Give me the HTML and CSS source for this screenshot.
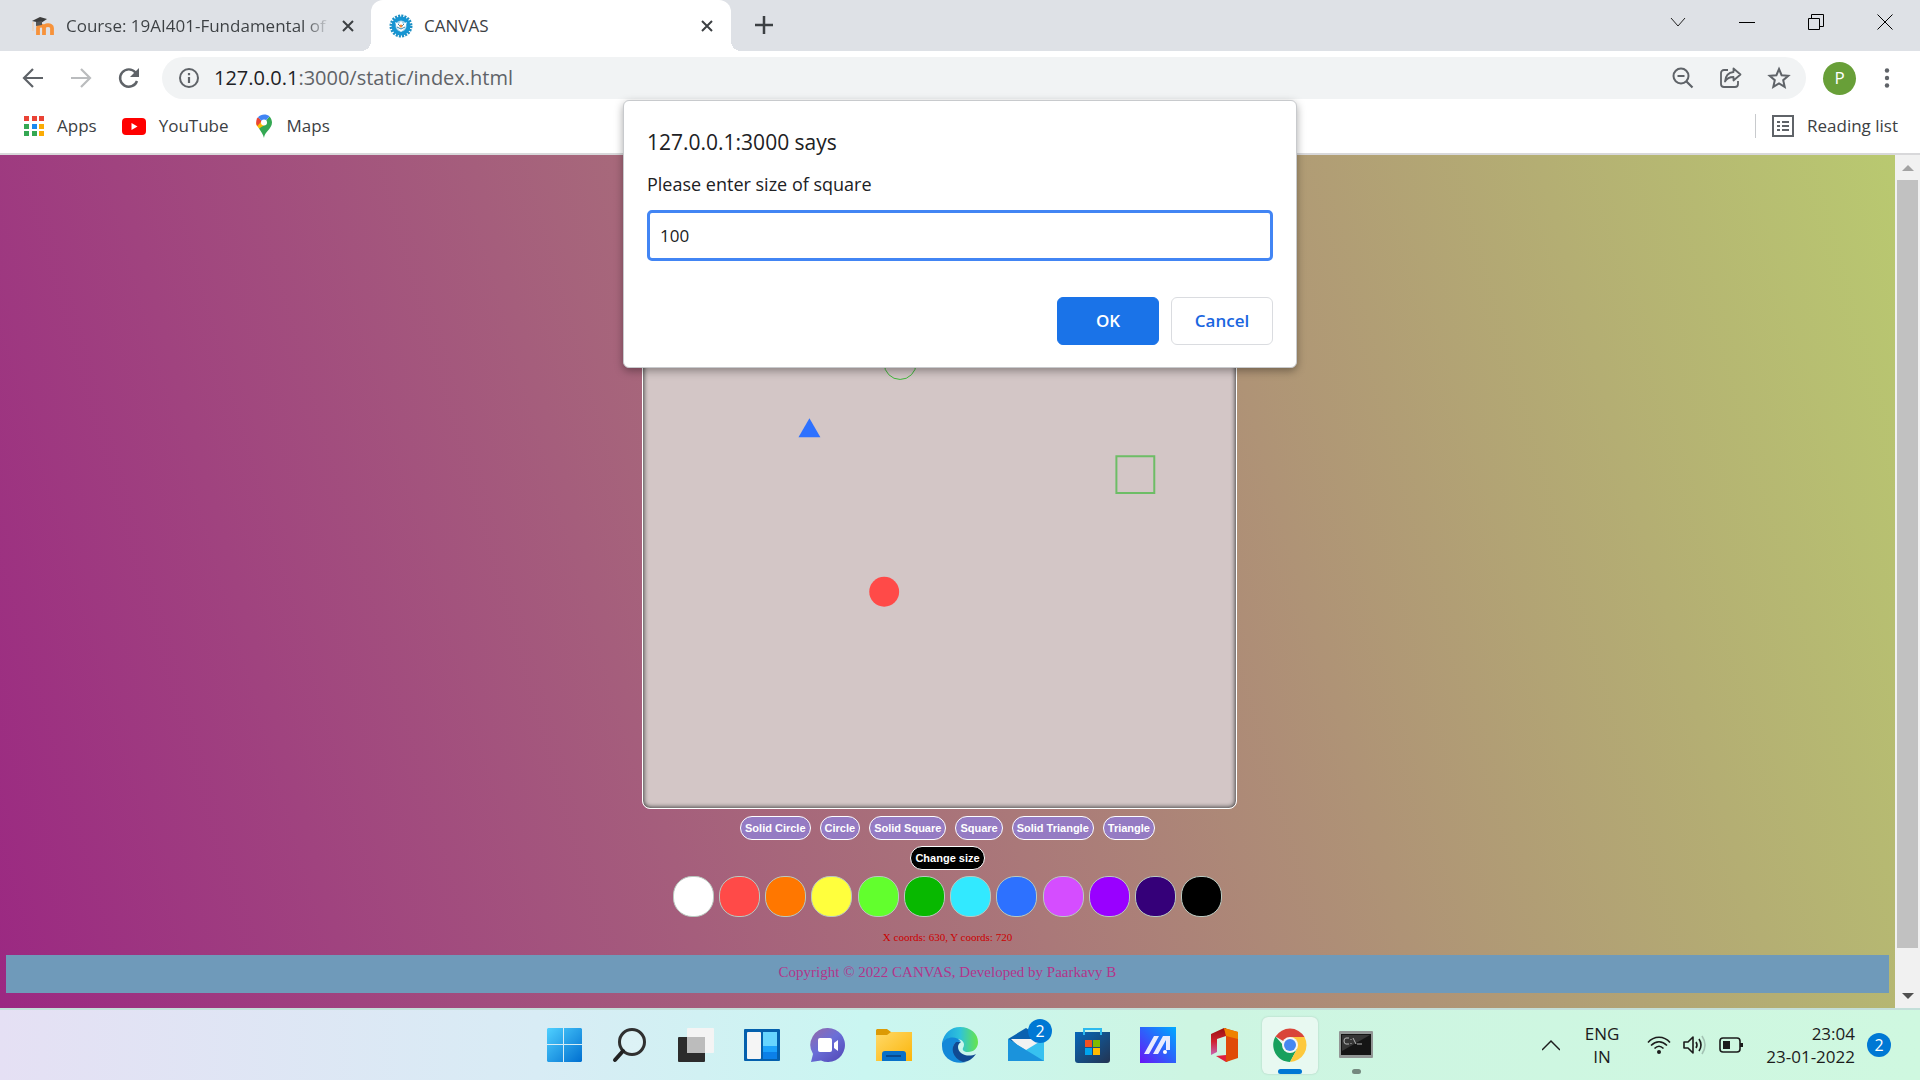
FILE: index.html
```html
<!DOCTYPE html>
<html lang="en">
<head>
<meta charset="utf-8">
<title>CANVAS</title>
<link rel="stylesheet" href="styles.css">
</head>
<body>
<header class="browser">
  <div class="tabstrip">
    <div class="tab tab-idle">
      <svg class="favicon" width="24" height="24" viewBox="0 0 24 24"><path d="M7 21v-7c0-3 6-3.500 6 0v7M13 14c0-3.500 8-4 8 0v7" fill="none" stroke="#f7923a" stroke-width="3.800"/><path d="M1 7l8-4 7 2-6 4z" fill="#3c3c3c"/><path d="M5 8v4l6-1V7z" fill="#555"/><path d="M2 8v9" stroke="#f5c9a2"/></svg>
      <span class="tab-title fade">Course: 19AI401-Fundamental of</span>
      <button class="icon-btn" aria-label="Close tab"><svg width="14" height="14" viewBox="0 0 14 14"><path d="M2 2l10 10M12 2L2 12" stroke="#3c4043" stroke-width="2"/></svg></button>
    </div>
    <div class="tab tab-active">
      <svg class="favicon" width="24" height="24" viewBox="0 0 24 24"><circle cx="12" cy="12" r="10" fill="none" stroke="#1d8fc4" stroke-width="3" stroke-dasharray="2 1.140"/><circle cx="12" cy="12" r="9.500" fill="#1595d3"/><circle cx="12" cy="12" r="5.500" fill="#a9d5ea"/><path d="M6 8l4 2 2-3 2 3 4-2-2 6-4 4-4-4z" fill="#fff"/><path d="M8 13l4 2 4-2M9 10l2 2M15 10l-2 2" fill="none" stroke="#3487ae"/><circle cx="12" cy="12" r="1.500" fill="#f08a3c"/></svg>
      <span class="tab-title">CANVAS</span>
      <button class="icon-btn" aria-label="Close tab"><svg width="14" height="14" viewBox="0 0 14 14"><path d="M2 2l10 10M12 2L2 12" stroke="#3c4043" stroke-width="2"/></svg></button>
    </div>
    <button class="icon-btn new-tab" aria-label="New tab"><svg width="18" height="18" viewBox="0 0 18 18"><path d="M9 0v18M0 9h18" stroke="#3c4043" stroke-width="2.500"/></svg></button>
    <div class="window-controls">
      <button class="icon-btn" aria-label="Search tabs"><svg width="16" height="16" viewBox="0 0 16 16"><path d="M1 4l7 8 7-8" fill="none" stroke="#222"/></svg></button>
      <button class="icon-btn" aria-label="Minimize"><svg width="16" height="16" viewBox="0 0 16 16"><path d="M0 8.500h16" stroke="#000"/></svg></button>
      <button class="icon-btn" aria-label="Restore"><svg width="16" height="16" viewBox="0 0 16 16"><path d="M.5 4.500h11v11H.5zM3.500 4V.5h12v12H12" fill="none" stroke="#000"/></svg></button>
      <button class="icon-btn" aria-label="Close"><svg width="16" height="16" viewBox="0 0 16 16"><path d="M.5.5l15 15M15.500.5l-15 15" stroke="#000"/></svg></button>
    </div>
  </div>
  <div class="toolbar">
    <button class="icon-btn nav" aria-label="Back"><svg width="24" height="24" viewBox="0 0 24 24"><path d="M22 12H3M12 3l-9 9 9 9" fill="none" stroke="#5f6368" stroke-width="2.200"/></svg></button>
    <button class="icon-btn nav" aria-label="Forward"><svg width="24" height="24" viewBox="0 0 24 24"><path d="M2 12h19M12 3l9 9-9 9" fill="none" stroke="#babcbe" stroke-width="2.200"/></svg></button>
    <button class="icon-btn nav" aria-label="Reload"><svg width="24" height="24" viewBox="0 0 24 24"><path d="M20 15a8.700 8.700 0 1 1-1.500-8.500" fill="none" stroke="#5f6368" stroke-width="2.400"/><path d="M22 2v9h-9z" fill="#5f6368"/></svg></button>
    <div class="omnibox">
      <svg width="22" height="22" viewBox="0 0 22 22"><circle cx="11" cy="11" r="9" fill="none" stroke="#5f6368" stroke-width="2"/><path d="M11 10v6M11 6v2.200" stroke="#5f6368" stroke-width="2.200"/></svg>
      <span class="url"><b>127.0.0.1</b>:3000/static/index.html</span>
      <button class="icon-btn" aria-label="Zoom"><svg width="24" height="24" viewBox="0 0 24 24"><circle cx="10" cy="10" r="7.500" fill="none" stroke="#5f6368" stroke-width="2"/><path d="M15 15l6.500 6.500M6.500 10h7" stroke="#5f6368" stroke-width="2.200"/></svg></button>
      <button class="icon-btn" aria-label="Share"><svg width="24" height="24" viewBox="0 0 24 24"><path d="M9 4H5a3 3 0 0 0-3 3v11a3 3 0 0 0 3 3h11a3 3 0 0 0 3-3v-3" fill="none" stroke="#5f6368" stroke-width="1.800"/><path d="M14.500 2.500l7 6-7 6V11c-4 0-6.500 1-8.500 4.500C6.500 10 9.500 6.500 14.500 6z" fill="none" stroke="#5f6368" stroke-width="1.800" stroke-linejoin="round"/></svg></button>
      <button class="icon-btn" aria-label="Bookmark"><svg width="24" height="24" viewBox="0 0 24 24"><path d="M12 3l2.600 6.200 6.700.6-5.100 4.400 1.500 6.600-5.700-3.500-5.700 3.500 1.500-6.600L2.700 9.800l6.700-.6z" fill="none" stroke="#5f6368" stroke-width="2"/></svg></button>
    </div>
    <button class="avatar" aria-label="Profile">P</button>
    <button class="icon-btn menu" aria-label="Menu"><svg width="6" height="22" viewBox="0 0 6 22"><g fill="#5f6368"><circle cx="3" cy="3.500" r="2.200"/><circle cx="3" cy="11" r="2.200"/><circle cx="3" cy="18.500" r="2.200"/></g></svg></button>
  </div>
  <nav class="bookmarks">
    <a href="#apps"><svg width="20" height="20" viewBox="0 0 20 20"><path fill="#ea4335" d="M0 0h5v5H0zM8 0h5v5H8zM15 0h5v5h-5z"/><path fill="#34a853" d="M0 8h5v5H0zM0 15h5v5H0zM8 15h5v5H8z"/><path fill="#1a88f0" d="M8 8h5v5H8z"/><path fill="#fbac05" d="M15 8h5v5h-5zM15 15h5v5h-5z"/></svg>Apps</a>
    <a href="#youtube"><svg width="24" height="20" viewBox="0 0 24 20"><rect y="2" width="24" height="17" rx="4" fill="#f00"/><path d="M9.500 7v7l6-3.500z" fill="#fff"/></svg>YouTube</a>
    <a href="#maps"><svg width="20" height="24" viewBox="0 0 20 24"><path d="M10 24c0-6 8-9 8-15.500 0-2-1-4.500-2.500-6L5 14.500C7 17.500 9 20 10 24z" fill="#34a853"/><path d="M5 14.500C3.500 12.500 2 11 2 8.500L10 8l3 1.500z" fill="#fbbc04"/><path d="M4 3.200L8 7 3.200 12C2 10 1.500 6 4 3.200z" fill="#ea4335"/><path d="M4 3.200C7 0 12.500-.2 15.500 2.500L9.500 9z" fill="#4285f4"/><circle cx="10" cy="8.500" r="3" fill="#fff"/></svg>Maps</a>
    <a class="reading" href="#reading"><svg width="22" height="22" viewBox="0 0 22 22"><path d="M1 1h20v20H1z" fill="none" stroke="#5f6368" stroke-width="2"/><path d="M5 7h3M5 11h3M5 15h3M10 7h7M10 11h7M10 15h7" stroke="#5f6368" stroke-width="2"/></svg>Reading list</a>
  </nav>
</header>

<div class="viewport">
  <main class="page">
    <svg class="board" width="595" height="595" viewBox="0 0 595 595" role="img" aria-label="Drawing board">
      <circle cx="258" cy="149" r="16" fill="none" stroke="#3fb53a"/>
      <path d="M167 204l11 19h-22z" fill="#2d71ff"/>
      <path d="M475 242h38v37h-38z" fill="none" stroke="#6dbd66" stroke-width="2"/>
      <circle cx="242" cy="378" r="15" fill="#ff4a48"/>
    </svg>
    <div class="row shapes">
      <button class="pill">Solid Circle</button><button class="pill">Circle</button><button class="pill">Solid Square</button><button class="pill">Square</button><button class="pill">Solid Triangle</button><button class="pill">Triangle</button>
    </div>
    <div class="row"><button class="pill dark">Change size</button></div>
    <div class="row swatches">
      <button class="swatch white" aria-label="White"></button><button class="swatch red" aria-label="Red"></button><button class="swatch orange" aria-label="Orange"></button><button class="swatch yellow" aria-label="Yellow"></button><button class="swatch lime" aria-label="Lime"></button><button class="swatch green" aria-label="Green"></button><button class="swatch cyan" aria-label="Cyan"></button><button class="swatch blue" aria-label="Blue"></button><button class="swatch pink" aria-label="Pink"></button><button class="swatch violet" aria-label="Violet"></button><button class="swatch indigo" aria-label="Indigo"></button><button class="swatch black" aria-label="Black"></button>
    </div>
    <p class="coords">X coords: 630, Y coords: 720</p>
    <footer class="copyright">Copyright © 2022 CANVAS, Developed by Paarkavy B</footer>
  </main>
  <div class="scrollbar">
    <svg width="12" height="6" viewBox="0 0 12 6"><path d="M0 6l6-6 6 6z" fill="#a3a3a3"/></svg>
    <div class="thumb"></div>
    <svg width="12" height="6" viewBox="0 0 12 6"><path d="M0 0l6 6 6-6z" fill="#505050"/></svg>
  </div>
</div>

<div class="overlay">
  <form class="dialog" role="dialog" aria-labelledby="says">
    <h1 id="says">127.0.0.1:3000 says</h1>
    <label for="size">Please enter size of square</label>
    <input id="size" type="text" value="100">
    <div class="actions">
      <button type="button" class="btn primary">OK</button>
      <button type="button" class="btn">Cancel</button>
    </div>
  </form>
</div>

<footer class="taskbar">
  <div class="apps">
    <button class="app" aria-label="Start"><svg width="36" height="36" viewBox="0 0 36 36"><defs><linearGradient id="win" x1="0" y1="0" x2="1" y2="1" ><stop offset="0" stop-color="#4fd0ff"/><stop offset="1" stop-color="#006fd0"/></linearGradient></defs><path d="M2 1h15v16H1V2zM18 1h17l1 1v15H18zM1 18h16v17H2l-1-1zM18 18h18v16l-1 1H18z" fill="url(#win)"/></svg></button>
    <button class="app" aria-label="Search"><svg width="36" height="36" viewBox="0 0 36 36"><circle cx="20" cy="15" r="12.500" fill="#e3f3f7" fill-opacity=".6" stroke="#303030" stroke-width="3"/><path d="M11 24l-8 9" stroke="#222" stroke-width="4" stroke-linecap="round"/></svg></button>
    <button class="app" aria-label="Task view"><svg width="36" height="36" viewBox="0 0 36 36"><rect y="10" width="27" height="25" rx="1" fill="#2c2c2c"/><rect x="9" y="1" width="27" height="25" rx="1" fill="#f4f4f4"/><path d="M9 10h18v16H9z" fill="#bcbcbc"/></svg></button>
    <button class="app" aria-label="Widgets"><svg width="36" height="36" viewBox="0 0 36 36"><rect y="2" width="36" height="32" rx="1" fill="#0460ad"/><rect x="3" y="5" width="14" height="27" rx="1" fill="#f5f5f5"/><path d="M19 5h14v14H19z" fill="#67d5ff"/><path d="M19 19h14v6H19z" fill="#1ba2fb"/><path d="M19 25h14v7H19z" fill="#0b80e8"/></svg></button>
    <button class="app" aria-label="Chat"><svg width="36" height="36" viewBox="0 0 36 36"><defs><linearGradient id="chat" x1="0" y1="0" x2=".8" y2="1"><stop offset="0" stop-color="#976aa6"/><stop offset=".5" stop-color="#6a6fd8"/><stop offset="1" stop-color="#554cba"/></linearGradient></defs><path d="M18 1a17 17 0 1 1-7 32.500L1 35l2-8A17 17 0 0 1 18 1z" fill="url(#chat)"/><rect x="8" y="11" width="14" height="14" rx="2" fill="#fff"/><path d="M24 16l4-3v11l-4-3z" fill="#fff"/></svg></button>
    <button class="app" aria-label="Explorer"><svg width="36" height="36" viewBox="0 0 36 36"><defs><linearGradient id="fold" x1="0" y1="0" x2="1" y2="1"><stop offset="0" stop-color="#ffd969"/><stop offset="1" stop-color="#fbb50a"/></linearGradient></defs><path d="M0 10V3l1-1h10l4 3h20l1 1v4z" fill="#dc9a05"/><path d="M0 8h11l4-3h21v29H0z" fill="url(#fold)"/><path d="M6 34V27a3 3 0 0 1 3-3h18a3 3 0 0 1 3 3v7z" fill="#0870c8"/><path d="M10 29h15" stroke="#08498d" stroke-width="2"/></svg></button>
    <button class="app" aria-label="Edge"><svg width="36" height="36" viewBox="0 0 36 36"><defs><linearGradient id="edge"><stop offset="0" stop-color="#1b9de2"/><stop offset=".5" stop-color="#2fc3da"/><stop offset="1" stop-color="#67e54a"/></linearGradient></defs><path d="M0 16C2 6 9 0 18 0c11 0 18 7 18 15 0 6-4 10-10 10-4 0-6-2-5-4 3-5-1-9-6-9C8 10 3 12 0 16z" fill="url(#edge)"/><path d="M0 16c3-6 15-8 19-1-6-1-9 4-7 10 2 5 7 8 12 10C13 38 0 32 0 19z" fill="#1388d8"/><path d="M14 15c-6 5-4 16 7 20 6 0 10-4 13-8-8 4-18 0-18-7 0-2 1-4 3-5z" fill="#114a92"/></svg></button>
    <button class="app" aria-label="Mail"><svg width="36" height="36" viewBox="0 0 36 36"><path d="M0 12L18 1l18 11v6H0z" fill="#0a61b0"/><path d="M3 12h30v9l-15 6z" fill="#f2f2f2"/><path d="M0 12l18 11L36 12v22H0z" fill="#37c1f0"/><path d="M0 12l36 22H0z" fill="#1b93dc"/></svg><span class="badge">2</span></button>
    <button class="app" aria-label="Store"><svg width="36" height="36" viewBox="0 0 36 36"><defs><linearGradient id="store" x1="0" y1="0" x2="1" y2="1"><stop offset="0" stop-color="#0767b9"/><stop offset="1" stop-color="#233451"/></linearGradient></defs><path d="M1 5h35v28a3 3 0 0 1-3 3H4a3 3 0 0 1-3-3z" fill="url(#store)"/><path d="M10 8V2h17v6" fill="none" stroke="#2cb9ee" stroke-width="2"/><path d="M11 13h7v7h-7z" fill="#f25022"/><path d="M19 13h7v7h-7z" fill="#7fba00"/><path d="M11 21h7v7h-7z" fill="#00a4ef"/><path d="M19 21h7v7h-7z" fill="#ffb900"/></svg></button>
    <button class="app" aria-label="MyASUS"><svg width="36" height="36" viewBox="0 0 36 36"><defs><linearGradient id="asus" x1="0" y1="1" x2="1" y2="0"><stop offset="0" stop-color="#6a14f5"/><stop offset=".5" stop-color="#2c62fb"/><stop offset="1" stop-color="#00aaff"/></linearGradient></defs><path d="M0 0h36v36H0z" fill="url(#asus)"/><path d="M4 27L14 9h5L9 27zM13 27L23 9h7v14h-4V13l-8 14z" fill="#e9ecff"/><circle cx="25" cy="25" r="2" fill="#fff"/></svg></button>
    <button class="app" aria-label="Office"><svg width="36" height="36" viewBox="0 0 36 36"><defs><linearGradient id="off" x1="0" y1="0" x2="0" y2="1"><stop offset="0" stop-color="#980f0f"/><stop offset=".5" stop-color="#d0222f"/><stop offset="1" stop-color="#c667b4"/></linearGradient></defs><path d="M18 1L5 7v21l6-3V12l9-3V1z" fill="url(#off)"/><path d="M10 29l10-1v-3l6 7-6 3z" fill="#e01f3d"/><path d="M18 1l14 4v26l-12 4V8z" fill="#e04a08"/><path d="M18 1l14 4v7l-12-3z" fill="#ef8200"/></svg></button>
    <button class="app active" aria-label="Chrome"><svg width="36" height="36" viewBox="0 0 36 36"><path d="M18 18L3.500 9.500A17 17 0 0 1 32.500 10z" fill="#d9453a"/><path d="M18 18h-7L3.500 9.500A17 17 0 0 0 18 35l7-13z" fill="#17a05d"/><path d="M18 10h14.500A17 17 0 0 1 18 35l7-13z" fill="#fdc93d"/><circle cx="18" cy="18" r="8" fill="#f4f6f4"/><circle cx="18" cy="18" r="6" fill="#4688f1"/></svg></button>
    <button class="app running" aria-label="Terminal"><svg width="36" height="36" viewBox="0 0 36 36"><rect x="1" y="4" width="34" height="27" rx="1" fill="#929695"/><path d="M3 7h30v21H3z" fill="#151515"/><path d="M4 8h28L4 24z" fill="#363636"/><path d="M11 11H8q-2 0-2 3t2 3h3M13 12v1M13 16v1M15 11l3 6M19 17h5" fill="none" stroke="#b5b5b5"/></svg></button>
  </div>
  <div class="tray">
    <button class="icon-btn" aria-label="Hidden icons"><svg width="18" height="12" viewBox="0 0 18 12"><path d="M0 11l9-9 9 9" fill="none" stroke="#1c1c1c" stroke-width="1.500"/></svg></button>
    <div class="lang">ENG<br>IN</div>
    <div class="status">
      <svg width="24" height="20" viewBox="0 0 24 20"><g fill="none" stroke="#1c1c1c" stroke-width="1.600"><path d="M1 7.500c6-7 16-7 22 0"/><path d="M4 10.500c5-5 11-5 16 0"/><path d="M7.500 13.500c3-3 6-3 9 0"/></g><circle cx="12" cy="17" r="2" fill="#1c1c1c"/></svg>
      <svg width="24" height="20" viewBox="0 0 24 20"><g fill="none" stroke="#1c1c1c" stroke-width="1.600"><path d="M1 7h4l5-5v16l-5-5H1z" stroke-linejoin="round"/><path d="M13 7q2 3 0 6M16 4q4 6 0 12"/><path d="M19 1q6 9 0 18" stroke="#a4c3b4"/></g></svg>
      <svg width="24" height="20" viewBox="0 0 24 20"><rect x="1" y="3" width="20" height="14" rx="3" fill="none" stroke="#1c1c1c" stroke-width="1.600"/><path d="M4 6h7v8H4zM21 8h3v4h-3z" fill="#1c1c1c"/></svg>
    </div>
    <div class="clock">23:04<br>23-01-2022</div>
    <span class="count">2</span>
  </div>
</footer>
</body>
</html>
```
FILE: styles.css
```css
* { box-sizing: border-box; }
body {
  margin: 0;
  min-height: 100vh;
  display: flex;
  flex-direction: column;
  position: relative;
  font: 17px/24px "Open Sans", "Noto Sans", sans-serif;
  color: #3c4043;
}
button { font: inherit; color: inherit; border: 0; padding: 0; background: none; }
svg { display: block; flex: none; }
.icon-btn { display: flex; align-items: center; justify-content: center; width: 24px; height: 24px; flex: none; }

/* browser frame */
.browser { background: #fff; border-bottom: 2px solid #d8d8da; }
.tabstrip { display: flex; height: 51px; background: #dee1e6; }
.tab { display: flex; align-items: center; }
.tab-idle { width: 371px; padding: 0 11px 0 31px; }
.tab-active { position: relative; width: 360px; padding: 0 12px 0 18px; background: #fff; border-radius: 12px 12px 0 0; }
.tab-active::before, .tab-active::after { content: ""; position: absolute; bottom: 0; width: 10px; height: 10px; }
.tab-active::before { right: 100%; background: radial-gradient(circle at 0 0, transparent 10px, #fff 10px); }
.tab-active::after { left: 100%; background: radial-gradient(circle at 100% 0, transparent 10px, #fff 10px); }
.favicon { margin-right: 11px; }
.tab-title { flex: 1; white-space: nowrap; }
.fade { color: transparent; background: linear-gradient(to right, #3c4043 88%, #dee1e6 98%); -webkit-background-clip: text; background-clip: text; }
.new-tab { margin: 13px 0 0 21px; }
.window-controls { display: flex; gap: 45px; margin: 10px 23px 0 auto; }
.toolbar { display: flex; align-items: center; height: 54px; padding: 0 23px 0 21px; }
.nav { margin-right: 24px; }
.omnibox { display: flex; align-items: center; flex: 1; height: 42px; margin-left: -3px; padding: 0 15px 0 16px; gap: 24px; background: #f1f3f4; border-radius: 21px; }
.url { flex: 1; margin-left: -10px; font-size: 20px; color: #5f6368; }
.url b { font-weight: 400; color: #202124; }
.avatar { width: 33px; height: 33px; margin: 0 21px 0 17px; border-radius: 50%; background: #689f38; color: #fff; font-size: 17px; }
.menu { width: 20px; }
.bookmarks { display: flex; align-items: center; height: 48px; padding: 0 22px 6px 24px; gap: 25px; }
.bookmarks a { display: flex; align-items: center; gap: 13px; color: inherit; text-decoration: none; }
.bookmarks .reading { margin-left: auto; padding-left: 16px; border-left: 1px solid #c8cacd; }

/* web page */
.viewport { flex: 1; display: flex; background: #f1f1f1; }
.page {
  flex: 1;
  display: flex;
  flex-direction: column;
  align-items: center;
  padding: 59px 6px 15px;
  background: linear-gradient(74deg, #9b2882, #b9c970);
}
.board { margin-right: 16px; border: 1px solid #fff; border-radius: 8px; background: #d3c6c6; box-shadow: inset 0 0 4px 1px #444; }
.row { display: flex; justify-content: center; margin-top: 6px; }
.shapes { gap: 9px; margin-top: 7px; }
.pill { height: 24px; padding: 0 4px; border: 1px solid #fff; border-radius: 12px; background: #957bc3; color: #fff; font: bold 11px/20px "Liberation Sans", Arial, sans-serif; }
.dark { background: #000; }
.swatches { width: 550px; justify-content: space-between; }
.swatch { width: 41px; height: 41px; border: 1px solid #b9c9c0; border-radius: 19px; }
.white { background: #fff; }
.red { background: #ff4a48; }
.orange { background: #ff7700; }
.yellow { background: #ffff3d; }
.lime { background: #62ff2d; }
.green { background: #08b800; }
.cyan { background: #32e9ff; }
.blue { background: #2d71ff; }
.pink { background: #d54dff; }
.violet { background: #9900ff; }
.indigo { background: #350079; }
.black { background: #000; }
.coords { margin: 13px 0 11px; font: 11px/14px "Liberation Serif", "Times New Roman", serif; color: #cc0000; }
.copyright { align-self: stretch; height: 38px; padding-top: 8px; background: #6f9aba; color: #b3358a; text-align: center; font: 15px/18px "Liberation Serif", "Times New Roman", serif; }
.scrollbar { display: flex; flex-direction: column; align-items: center; width: 25px; padding: 10px 2px 9px; }
.thumb { flex: 1; align-self: stretch; margin: 9px 0 45px; background: #c1c1c1; }

/* prompt */
.overlay { position: absolute; top: 100px; left: 0; right: 0; display: flex; justify-content: center; }
.dialog { display: flex; flex-direction: column; width: 674px; height: 268px; padding: 27px 23px 22px; background: #fff; border: 1px solid #c8cacd; border-radius: 6px; box-shadow: 0 3px 8px rgba(0, 0, 0, .35); color: #202124; }
.dialog h1 { margin: 0 0 16px; font-size: 21px; line-height: 28px; font-weight: 400; }
.dialog label { font-size: 18px; }
.dialog input { height: 51px; margin-top: 14px; padding: 0 10px; border: 3px solid #4285f4; border-radius: 5px; outline: 0; font: inherit; color: inherit; }
.actions { display: flex; justify-content: flex-end; gap: 12px; margin-top: auto; }
.btn { width: 102px; height: 48px; border: 1px solid #dadce0; border-radius: 6px; color: #1a66e0; font-weight: 600; font-size: 17px; }
.primary { background: #1a73e8; border-color: #1a73e8; color: #fff; }

/* taskbar */
.taskbar {
  display: grid;
  grid-template-columns: 1fr auto 1fr;
  align-items: center;
  height: 72px;
  border-top: 2px solid #c3dfd9;
  background: linear-gradient(to right, #e5e0f4, #d8ecf5 28%, #caf6f1 45%, #cdf5e2 62%, #cff8e0);
  color: #1c1c1c;
}
.apps { grid-column: 2; display: flex; gap: 10px; }
.app { position: relative; display: flex; align-items: center; justify-content: center; width: 56px; height: 57px; border-radius: 6px; }
.active { background: #e8f9f1; box-shadow: 0 0 2px #a9c9bb; }
.active::after, .running::after { content: ""; position: absolute; bottom: 0; width: 24px; height: 5px; border-radius: 3px; background: #0078d4; }
.running::after { width: 9px; background: #75897f; }
.badge, .count { display: flex; align-items: center; justify-content: center; width: 24px; height: 24px; border-radius: 50%; background: #0078d4; color: #fff; font-size: 16px; }
.badge { position: absolute; top: 2px; right: 2px; }
.tray { display: flex; align-items: center; justify-content: flex-end; padding-right: 29px; }
.lang { margin: 0 28px 0 22px; text-align: center; line-height: 23px; }
.status { display: flex; gap: 12px; }
.clock { margin: 0 12px 0 23px; text-align: right; line-height: 23px; }
```
